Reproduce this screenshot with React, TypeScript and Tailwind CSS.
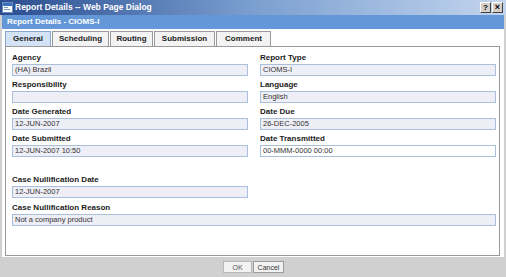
import React from "react";

const font = { fontFamily: '"Liberation Sans", Arial, sans-serif' };

function Field({ label, value, white, className = "" }: { label: string; value: string; white?: boolean; className?: string }) {
  return (
    <div className={`flex flex-col ${className}`}>
      <div className="h-[10px] leading-[10px] text-[8px] font-bold text-[#1c1c1c]">{label}</div>
      <div
        className={`mt-[1px] h-[12px] border border-[#a9bfdc] px-[2px] text-[7.5px] leading-[10px] text-[#333] ${
          white ? "bg-white" : "bg-[#eeeef6]"
        }`}
      >
        {value}
      </div>
    </div>
  );
}

const tabs = ["General", "Scheduling", "Routing", "Submission", "Comment"];
const tabWidths = ["w-[46px]", "w-[57px]", "w-[43px]", "w-[61px]", "w-[55px]"];

export default function App() {
  return (
    <div className="w-[506px] h-[277px] flex flex-col bg-[#d0d0d0] overflow-hidden" style={font}>
      {/* title bar */}
      <div className="h-[15px] flex items-center bg-gradient-to-r from-[#2b4d90] via-[#7b9fd0] to-[#c3d5ee] pl-[2px] pr-[3px]">
        <svg width="11" height="11" viewBox="0 0 11 11" className="mr-[2px]">
          <rect x="0.5" y="0.5" width="10" height="10" fill="#ffffff" stroke="#6b8fc4" />
          <rect x="1" y="1" width="9" height="3" fill="#3a6fc2" />
          <rect x="2" y="5" width="4" height="1" fill="#7a9acb" />
          <rect x="2" y="7" width="6" height="1" fill="#7a9acb" />
        </svg>
        <span className="text-white font-bold text-[8.5px] leading-none">Report Details -- Web Page Dialog</span>
        <div className="ml-auto flex gap-[1px]">
          <div className="w-[11px] h-[11px] bg-[#d4d0c8] border border-t-white border-l-white border-r-[#404040] border-b-[#404040] flex items-center justify-center text-[8px] font-bold leading-none text-black">
            ?
          </div>
          <div className="w-[11px] h-[11px] bg-[#d4d0c8] border border-t-white border-l-white border-r-[#404040] border-b-[#404040] flex items-center justify-center text-[9px] font-bold leading-none text-black">
            ×
          </div>
        </div>
      </div>

      <div className="flex-1 flex flex-col px-[2px]">
        {/* subheader */}
        <div className="h-[14px] bg-[#6397d8] flex items-center px-[5px]">
          <span className="text-white font-bold text-[8px] leading-none">Report Details - CIOMS-I</span>
        </div>

        <div className="flex-1 flex flex-col bg-white pl-[3px] pr-[4px] pt-[2px] pb-[1px]">
          {/* tabs */}
          <div className="h-[15px] flex">
            {tabs.map((t, i) => (
              <div
                key={t}
                className={`${tabWidths[i]} h-[15px] mr-[1px] flex items-center justify-center border border-b-0 text-[8px] font-bold leading-none text-[#1c1c1c] ${
                  i === 0 ? "bg-[#d3e2f4] border-[#8aa6cc]" : "bg-[#f3f3f3] border-[#9a9a9a]"
                }`}
              >
                {t}
              </div>
            ))}
          </div>

          {/* panel */}
          <div className="flex-1 border border-[#9a9a9a] pl-[6px] pr-[2px] pt-[6px]">
            <div className="grid grid-cols-[236px_236px] gap-x-[12px] gap-y-[4px]">
              <Field label="Agency" value="(HA) Brazil" />
              <Field label="Report Type" value="CIOMS-I" />
              <Field label="Responsibility" value="" />
              <Field label="Language" value="English" />
              <Field label="Date Generated" value="12-JUN-2007" />
              <Field label="Date Due" value="26-DEC-2005" />
              <Field label="Date Submitted" value="12-JUN-2007 10:50" />
              <Field label="Date Transmitted" value="00-MMM-0000 00:00" white />
            </div>
            <div className="mt-[18px] w-[236px]">
              <Field label="Case Nullification Date" value="12-JUN-2007" />
            </div>
            <div className="mt-[5px] w-[484px]">
              <Field label="Case Nullification Reason" value="Not a company product" />
            </div>
          </div>
        </div>

        {/* footer */}
        <div className="h-[20px] flex items-center justify-center gap-[1px] pl-[1px]">
          <div className="w-[29px] h-[12px] bg-[#f2f2f2] border border-[#b8b8b8] flex items-center justify-center text-[7px] leading-none text-[#555]">
            OK
          </div>
          <div className="w-[31px] h-[12px] bg-[#f2f2f2] border border-[#9c9c9c] flex items-center justify-center text-[7px] leading-none text-[#333]">
            Cancel
          </div>
        </div>
      </div>
    </div>
  );
}
